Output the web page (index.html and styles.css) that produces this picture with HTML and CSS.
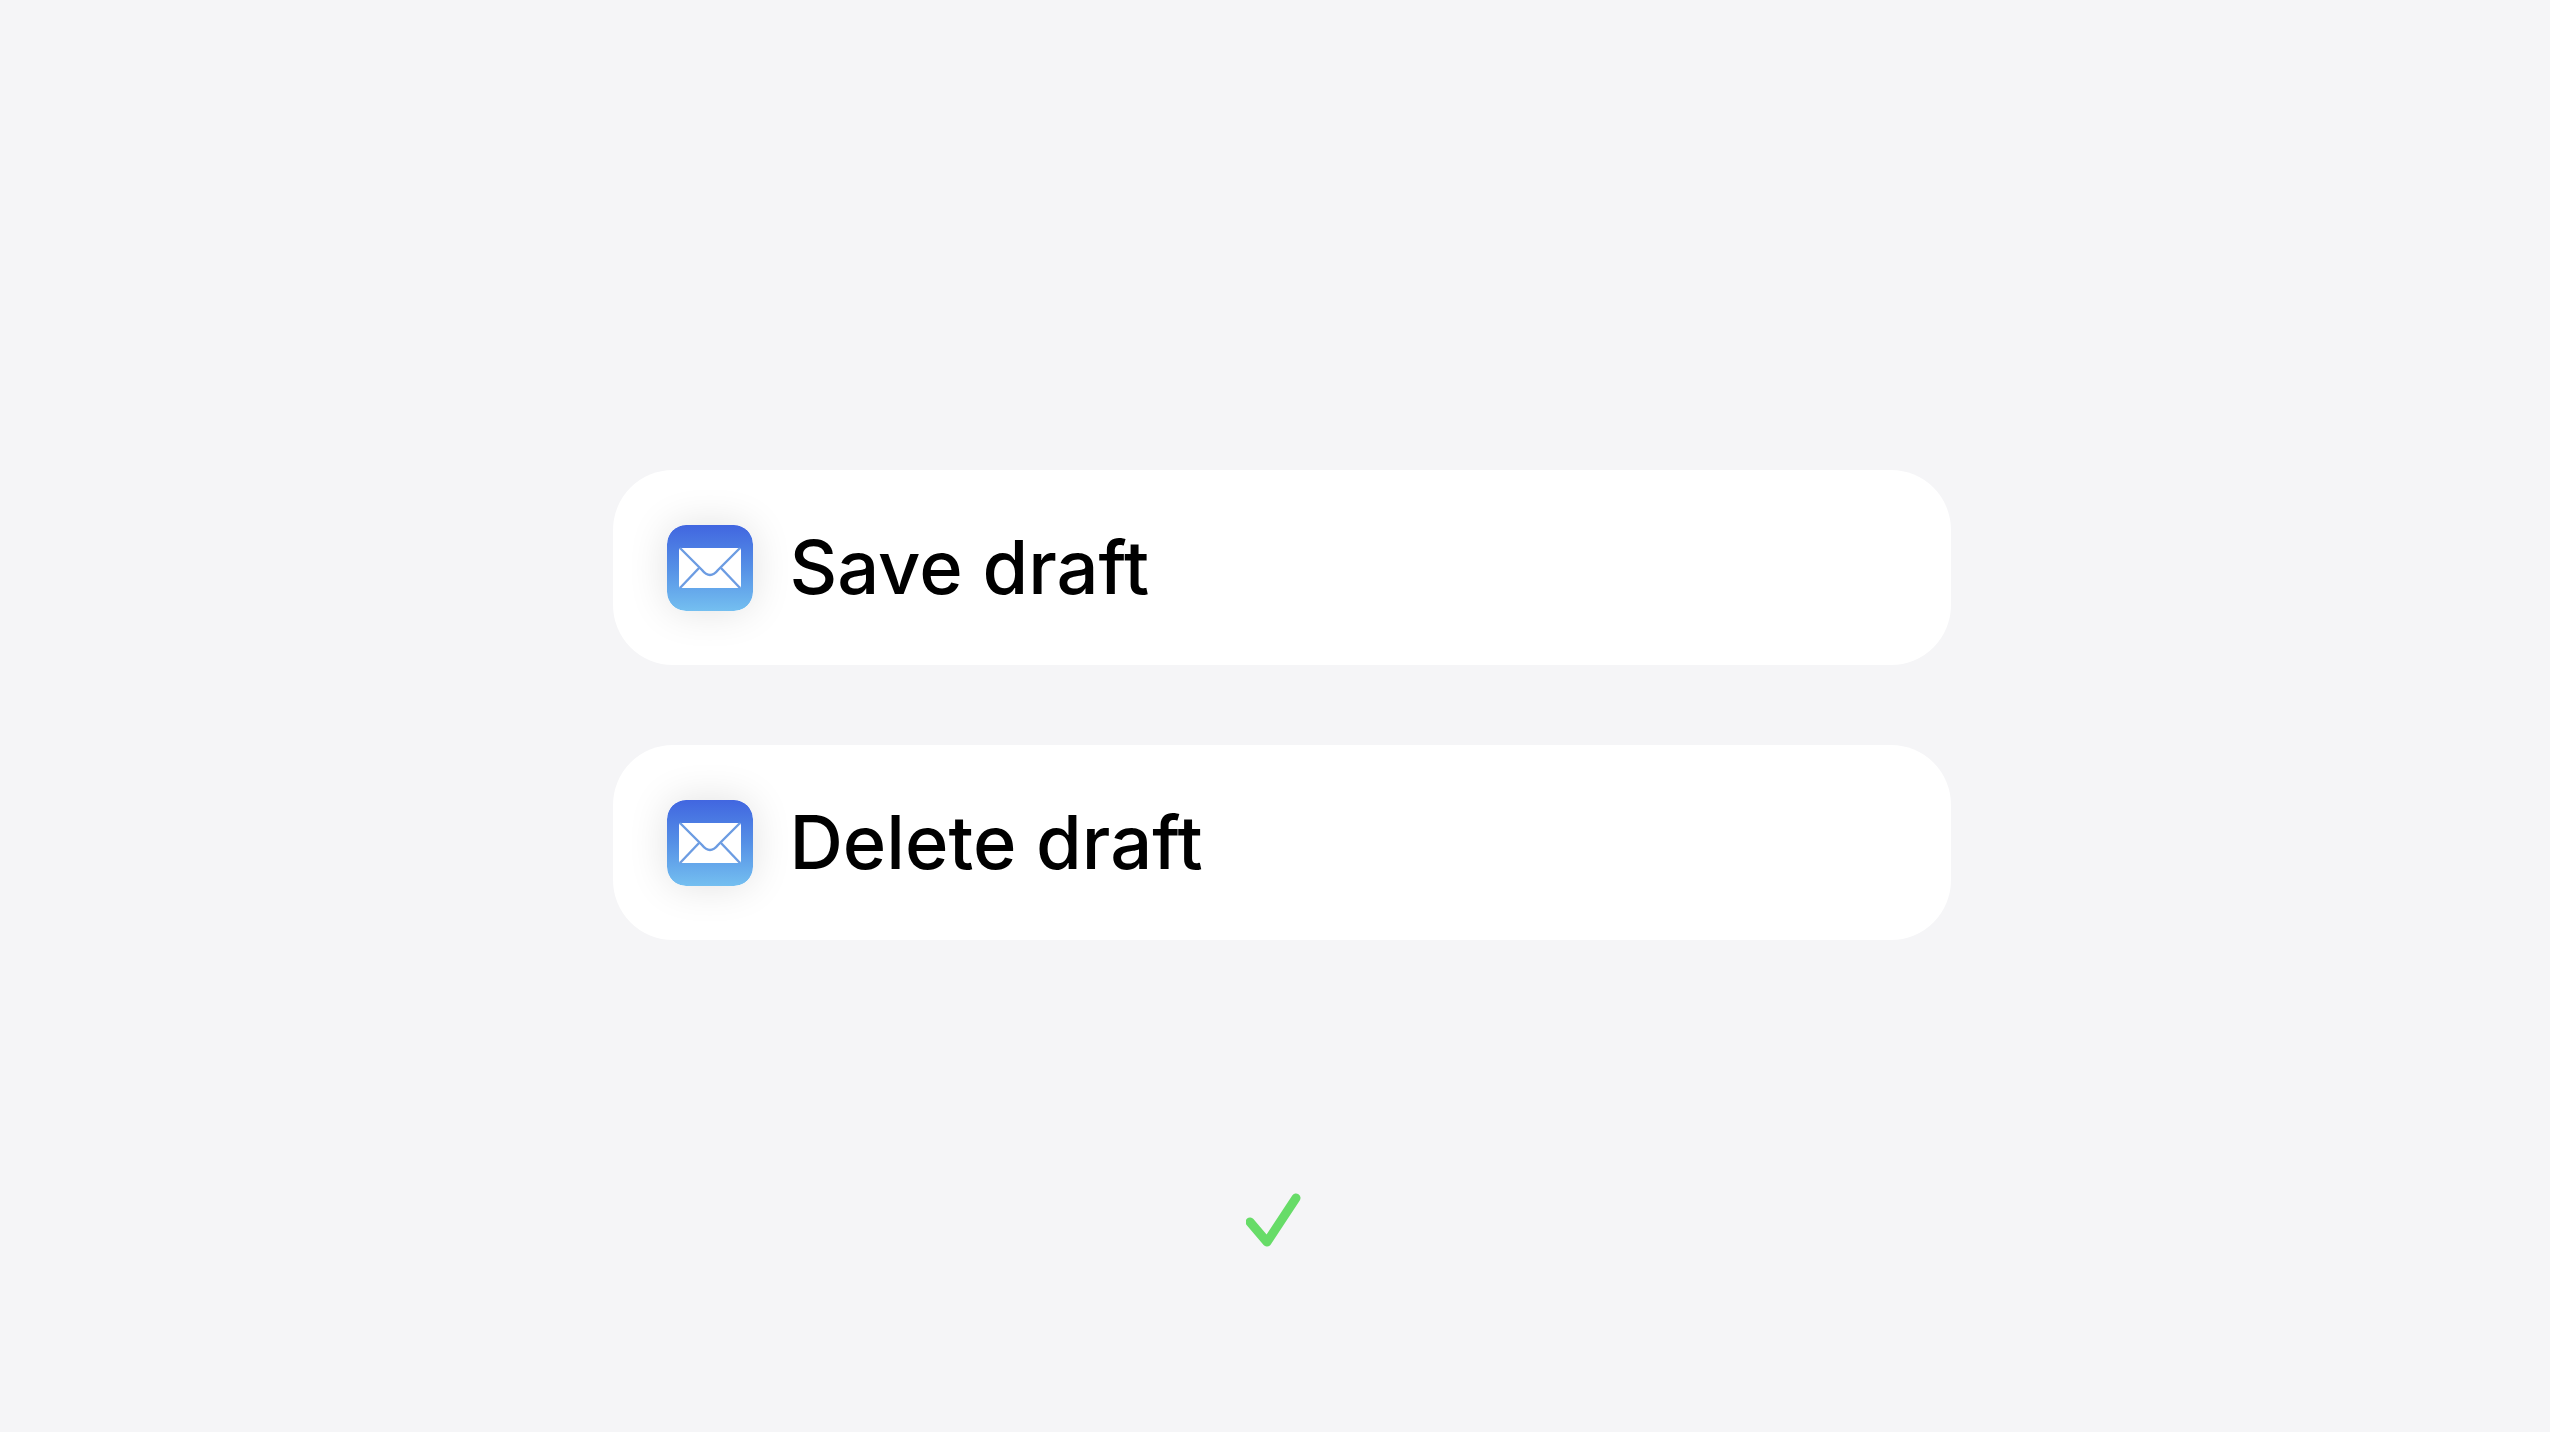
FILE: index.html
```html
<!DOCTYPE html>
<html lang="en">
<head>
  <meta charset="UTF-8" />
  <meta name="viewport" content="width=device-width, initial-scale=1.0"/>
  <title>Mail Actions</title>
  <link rel="stylesheet" href="styles.css">
</head>
<body>
  <!-- shared icon artwork -->
  <svg class="sprite" aria-hidden="true">
    <defs>
      <linearGradient id="mailSky" x1="0" y1="0" x2="0" y2="1">
        <stop offset="0" stop-color="#4166e0"/>
        <stop offset="0.5" stop-color="#5590e6"/>
        <stop offset="1" stop-color="#74bff0"/>
      </linearGradient>
      <symbol id="mail" viewBox="0 0 86 86">
        <rect width="86" height="86" rx="19" fill="url(#mailSky)"/>
        <rect x="12" y="23" width="62" height="40" rx="2" fill="#fff"/>
        <g fill="none" stroke="#6c9ce2" stroke-width="2.4">
          <path d="M13 23 L35 45 Q43 55 51 45 L73 23"/>
          <path d="M13 63 L32 43"/>
          <path d="M73 63 L54 43"/>
        </g>
      </symbol>
    </defs>
  </svg>

  <main class="container">
    <div class="actions">
      <button class="action" type="button">
        <svg class="action-icon" aria-hidden="true"><use href="#mail"/></svg>
        <span>Save draft</span>
      </button>
      <button class="action" type="button">
        <svg class="action-icon" aria-hidden="true"><use href="#mail"/></svg>
        <span>Delete draft</span>
      </button>
    </div>

    <svg class="check" viewBox="0 0 58 54" role="img" aria-label="Correct">
      <path d="M4 29 L21 49 L50 5"/>
    </svg>
  </main>
</body>
</html>
```
FILE: styles.css
```css
* {
  margin: 0;
  padding: 0;
  box-sizing: border-box;
  font-family: 'Inter', sans-serif;
}

body {
  min-height: 100vh;
  background: #f5f5f7;
  color: #000;
}

.sprite {
  position: absolute;
  width: 0;
  height: 0;
}

.container {
  display: flex;
  flex-direction: column;
  align-items: center;
  gap: 253px;
  padding: 470px 24px 80px;
}

.actions {
  display: flex;
  flex-direction: column;
  gap: 80px;
  width: 54%;
  padding-left: 14px;
}

.action {
  display: flex;
  align-items: center;
  gap: 36px;
  width: 100%;
  padding: 54px;
  border: none;
  border-radius: 60px;
  background: #fff;
  color: inherit;
  font-size: 74px;
  font-weight: 500;
  line-height: 87px;
  text-align: left;
  cursor: pointer;
}

.action-icon {
  flex: none;
  width: 86px;
  height: 86px;
  border-radius: 19px;
  box-shadow: 0 0 40px rgba(0, 0, 0, 0.12);
}

.check {
  width: 58px;
  height: 54px;
}

.check path {
  fill: none;
  stroke: #67dc68;
  stroke-width: 9;
  stroke-linecap: round;
  stroke-linejoin: round;
}
```
